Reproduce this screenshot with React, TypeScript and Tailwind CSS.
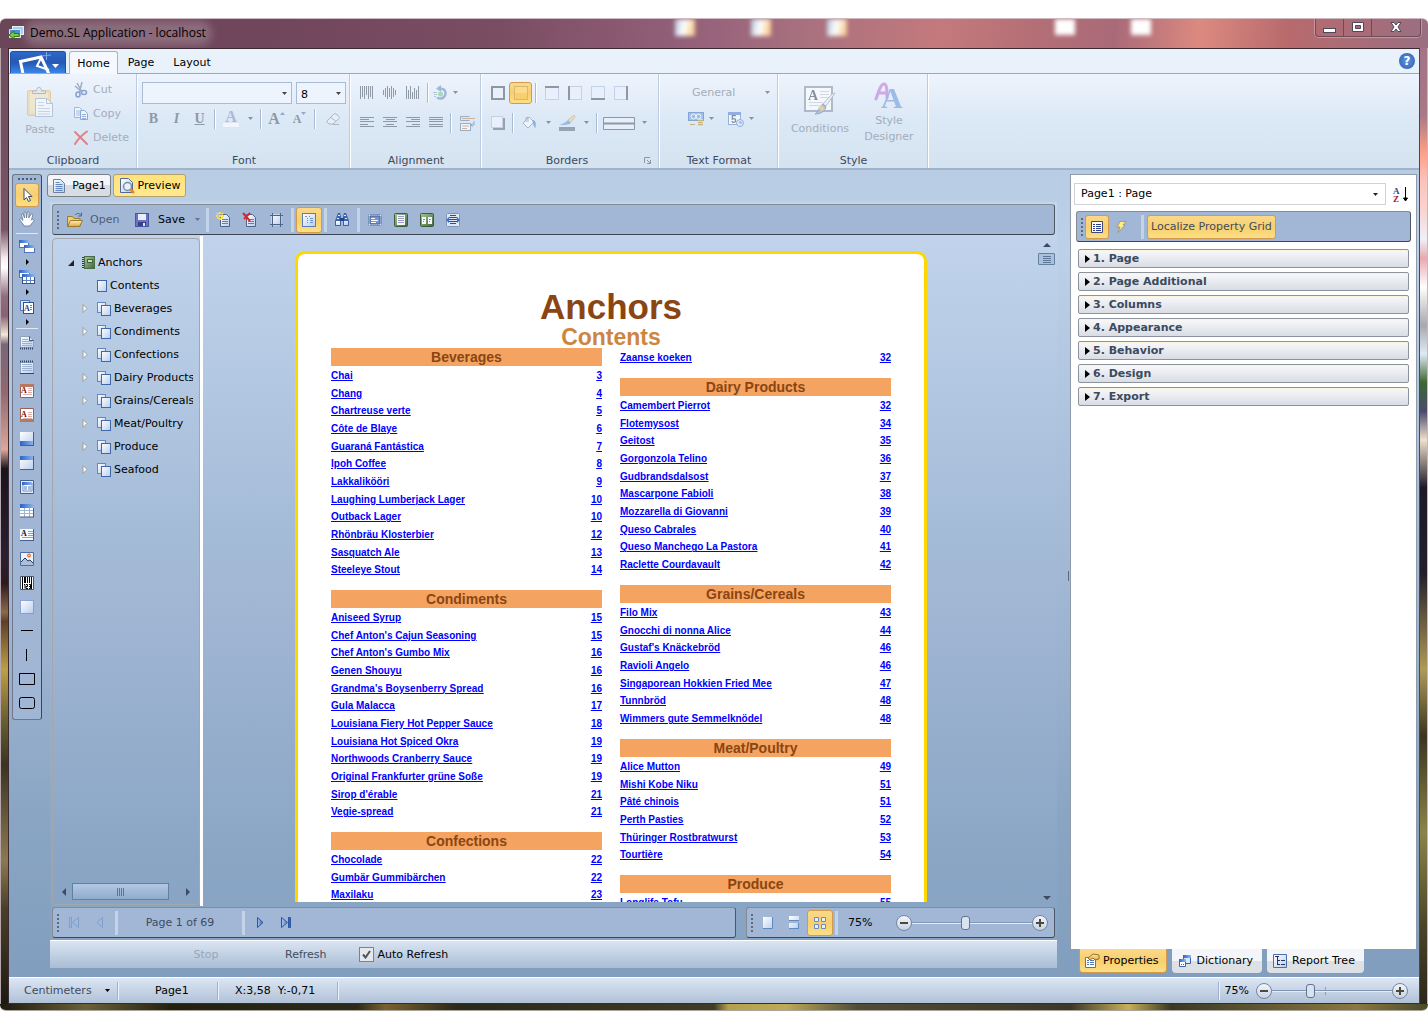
import { useState } from "react";
import type { ReactNode } from "react";
import clsx from "clsx";

type Entry = [string, number];
type Section = { title?: string; items: Entry[] };

const leftColumn: Section[] = [
  {
    title: "Beverages",
    items: [
      ["Chai", 3], ["Chang", 4], ["Chartreuse verte", 5], ["Côte de Blaye", 6], ["Guaraná Fantástica", 7], ["Ipoh Coffee", 8],
      ["Lakkalikööri", 9], ["Laughing Lumberjack Lager", 10], ["Outback Lager", 10], ["Rhönbräu Klosterbier", 12],
      ["Sasquatch Ale", 13], ["Steeleye Stout", 14],
    ],
  },
  {
    title: "Condiments",
    items: [
      ["Aniseed Syrup", 15], ["Chef Anton's Cajun Seasoning", 15], ["Chef Anton's Gumbo Mix", 16], ["Genen Shouyu", 16],
      ["Grandma's Boysenberry Spread", 16], ["Gula Malacca", 17], ["Louisiana Fiery Hot Pepper Sauce", 18],
      ["Louisiana Hot Spiced Okra", 19], ["Northwoods Cranberry Sauce", 19], ["Original Frankfurter grüne Soße", 19],
      ["Sirop d'érable", 21], ["Vegie-spread", 21],
    ],
  },
  { title: "Confections", items: [["Chocolade", 22], ["Gumbär Gummibärchen", 22], ["Maxilaku", 23]] },
];

const rightColumn: Section[] = [
  { items: [["Zaanse koeken", 32]] },
  {
    title: "Dairy Products",
    items: [
      ["Camembert Pierrot", 32], ["Flotemysost", 34], ["Geitost", 35], ["Gorgonzola Telino", 36], ["Gudbrandsdalsost", 37],
      ["Mascarpone Fabioli", 38], ["Mozzarella di Giovanni", 39], ["Queso Cabrales", 40], ["Queso Manchego La Pastora", 41],
      ["Raclette Courdavault", 42],
    ],
  },
  {
    title: "Grains/Cereals",
    items: [
      ["Filo Mix", 43], ["Gnocchi di nonna Alice", 44], ["Gustaf's Knäckebröd", 46], ["Ravioli Angelo", 46],
      ["Singaporean Hokkien Fried Mee", 47], ["Tunnbröd", 48], ["Wimmers gute Semmelknödel", 48],
    ],
  },
  {
    title: "Meat/Poultry",
    items: [
      ["Alice Mutton", 49], ["Mishi Kobe Niku", 51], ["Pâté chinois", 51], ["Perth Pasties", 52],
      ["Thüringer Rostbratwurst", 53], ["Tourtière", 54],
    ],
  },
  { title: "Produce", items: [["Longlife Tofu", 55]] },
];

const treeItems = ["Beverages", "Condiments", "Confections", "Dairy Products", "Grains/Cereals", "Meat/Poultry", "Produce", "Seafood"];
const propertyGroups = ["1. Page", "2. Page Additional", "3. Columns", "4. Appearance", "5. Behavior", "6. Design", "7. Export"];

/* ---------- icons ---------- */

function Svg({ w = 16, h = 16, className, children }: { w?: number; h?: number; className?: string; children: ReactNode }) {
  return (
    <svg width={w} height={h} viewBox={`0 0 ${w} ${h}`} className={clsx("shrink-0", className)} fill="none" aria-hidden="true">
      {children}
    </svg>
  );
}

function Gradients() {
  return (
    <svg width="0" height="0" className="absolute" aria-hidden="true">
      <defs>
        <linearGradient id="sheet" x1="0" y1="0" x2="1" y2="1">
          <stop offset="0" stopColor="#ffffff" />
          <stop offset="1" stopColor="#b9cdec" />
        </linearGradient>
        <linearGradient id="blue" x1="0" y1="0" x2="1" y2="0">
          <stop offset="0" stopColor="#2c62c8" />
          <stop offset="1" stopColor="#8fb6f2" />
        </linearGradient>
        <linearGradient id="gold" x1="0" y1="0" x2="0" y2="1">
          <stop offset="0" stopColor="#fdf0b4" />
          <stop offset="1" stopColor="#e0a93c" />
        </linearGradient>
        <linearGradient id="green" x1="0" y1="0" x2="1" y2="1">
          <stop offset="0" stopColor="#a9c79b" />
          <stop offset="1" stopColor="#3d6637" />
        </linearGradient>
        <linearGradient id="navBlue" x1="0" y1="0" x2="1" y2="0">
          <stop offset="0" stopColor="#a9c4ee" />
          <stop offset="1" stopColor="#2d5bb0" />
        </linearGradient>
      </defs>
    </svg>
  );
}

const Down = ({ className = "text-[#444]" }: { className?: string }) => (
  <Svg w={7} h={4} className={className}><path d="M1 0h5L3.500 3z" fill="currentColor" /></Svg>
);

const PasteIcon = () => (
  <Svg w={28} h={32} className="opacity-50">
    <rect x="1.500" y="4.500" width="23" height="25" rx="1.500" fill="#f3cf8a" stroke="#d6ae68" />
    <rect x="4" y="7" width="18" height="20" fill="#fbe2a8" />
    <path d="M6.500 7.500V5h4c0-5 5-5 5 0h4v2.500z" fill="#dfe3ea" stroke="#7c8694" />
    <path d="M9.500 12.500h11l6 5v13h-17z" fill="#fff" stroke="#8a9ebb" />
    <path d="M20.500 12.500v5h6" stroke="#8a9ebb" />
    <path d="M12 16.500h6M12 19.500h6M12 22.500h12M12 25.500h12M12 28h12" stroke="#a8bedd" />
  </Svg>
);

const CutIcon = () => (
  <Svg className="opacity-50">
    <path d="M4 1l5 9M9 0L6.500 10M2 4l7 6" stroke="#5b6b84" strokeWidth="1.500" />
    <ellipse cx="5" cy="12.500" rx="2" ry="2.500" stroke="#2f56b0" strokeWidth="1.600" />
    <ellipse cx="11" cy="10.500" rx="2.500" ry="2" stroke="#2f56b0" strokeWidth="1.600" />
  </Svg>
);

const CopyIcon = () => (
  <Svg className="opacity-50">
    <path d="M1.500 1.500h5l3 3v7h-8z" fill="#fff" stroke="#5f86c4" />
    <path d="M3 5h4M3 7h4M3 9h4" stroke="#6a90d2" />
    <path d="M7.500 4.500h4l3 3v6h-7z" fill="#fff" stroke="#3e68b4" />
    <path d="M9 8.500h4M9 10.500h4M9 12.500h4" stroke="#4b78c8" />
  </Svg>
);

const DeleteIcon = () => (
  <Svg className="opacity-50">
    <path d="M2 2l12 12M14 1.500C9 5 5 9 2 14" stroke="#e02020" strokeWidth="2" strokeLinecap="round" />
  </Svg>
);

const EraserIcon = () => (
  <Svg className="opacity-60">
    <path d="M2 10l7-7q1-1 2 0l3 2.500q1 1 0 2L8 13H4L2 11z" fill="#eef2f8" stroke="#8b97aa" />
    <path d="M6 6.500l5 4M8 13.500h6" stroke="#8b97aa" />
  </Svg>
);

// vertical bars, for top, middle and bottom alignment
const barShapes = {
  top: [13, 11, 13, 9, 13, 11, 13],
  middle: [5, 9, 13, 9, 13, 9, 5],
  bottom: [13, 9, 13, 7, 11, 9, 13],
};
const BarsIcon = ({ kind }: { kind: "top" | "middle" | "bottom" }) => (
  <Svg w={14} h={14}>
    {barShapes[kind].map((len, i) => {
      const y = kind === "top" ? 0 : kind === "middle" ? (13 - len) / 2 : 13 - len;
      return <rect key={i} x={i * 2} y={y} width="1" height={len} fill="#8f9aa6" />;
    })}
  </Svg>
);

const LinesIcon = ({ kind }: { kind: "left" | "center" | "right" | "full" }) => (
  <Svg w={14} h={12}>
    {[14, 9, 14, 8, 14].map((len, i) => {
      const w = kind === "full" ? 14 : len;
      const x = kind === "center" ? Math.round((14 - w) / 2) : kind === "right" ? 14 - w : 0;
      return <rect key={i} x={x} y={i * 2 + (i > 2 ? 1 : 0)} width={w} height="1" fill="#8d99a6" />;
    })}
  </Svg>
);

const RotateIcon = () => (
  <Svg className="opacity-60">
    <path d="M5 12.500c5 3 9-1 8.500-5C13 4 10 3.500 8 4" stroke="#6f93cc" strokeWidth="2.500" />
    <path d="M9 0v7L4 3.500z" fill="#6f93cc" />
    <circle cx="8.500" cy="9" r="2.500" fill="#7fd07f" />
    <path d="M1 7.500h4M2 9.500h3M2 11.500h2" stroke="#93a8c6" />
  </Svg>
);

const WrapIcon = () => (
  <Svg className="opacity-60">
    <path d="M1.500 1.500h9M1.500 5.500h9M1.500 1.500v4" stroke="#6f87aa" />
    <path d="M3 3.500h13" stroke="#c98d62" />
    <rect x="1.500" y="8.500" width="10" height="7" fill="#fff" stroke="#6f87aa" />
    <path d="M3 11h7M3 13.500h5" stroke="#c98d62" />
    <path d="M15 6v4h-3M13.500 8.500L12 10l1.500 1.500" stroke="#5b80b8" />
  </Svg>
);

const BorderIcon = ({ side }: { side: "all" | "none" | "top" | "left" | "bottom" | "right" | "shadow" }) => (
  <Svg>
    {side === "shadow" && <path d="M3 3h12v12H3z" fill="#98a2ae" />}
    <rect x="1.500" y="1.500" width={side === "shadow" ? 11 : 13} height={side === "shadow" ? 11 : 13}
      fill={side === "none" ? "#fbdc8d" : "#e9f0fb"} stroke={side === "none" ? "#d9b672" : "#c3d0e8"} />
    {side === "none" && <path d="M2 8h12v6H2z" fill="#f8cf6c" />}
    {side === "all" && <rect x="2" y="2" width="12" height="12" stroke="#8e98a3" strokeWidth="2" />}
    {side === "top" && <path d="M1 2h14" stroke="#8e98a3" strokeWidth="2" />}
    {side === "bottom" && <path d="M1 14h14" stroke="#8e98a3" strokeWidth="2" />}
    {side === "left" && <path d="M2 1v14" stroke="#8e98a3" strokeWidth="2" />}
    {side === "right" && <path d="M14 1v14" stroke="#8e98a3" strokeWidth="2" />}
  </Svg>
);

const BucketIcon = () => (
  <Svg className="opacity-60">
    <path d="M2 8l6-6 5 5-6 6z" fill="#fff" stroke="#8096b8" />
    <path d="M5 7V3q1-2 2 0v4" stroke="#8096b8" />
    <path d="M11 5c4 0 4 3 3.500 8-2-1-2-4-2.500-5z" fill="#5d87cc" />
  </Svg>
);

const BrushIcon = () => (
  <Svg w={18}>
    <g opacity="0.6">
      <path d="M16 0l-6 5 2 3 5-6z" fill="#edd49b" stroke="#c9b17b" />
      <path d="M10 5l3 3c-2 2-8 2-12 2 3-1 6-2 9-5z" fill="#6e9ade" />
    </g>
    <path d="M1 12h16v4H1z" fill="#97a3af" />
  </Svg>
);

const LineStyleIcon = () => (
  <Svg w={32} h={13}>
    <path d="M.5.5h31v12H.5z" stroke="#8e98a3" fill="#e6eefa" />
    <path d="M0 6.500h32" stroke="#8e98a3" strokeWidth="2" />
  </Svg>
);

const CurrencyIcon = () => (
  <Svg className="opacity-60">
    <rect x=".5" y="1.500" width="15" height="8" fill="#7ba3e0" stroke="#4d79c0" />
    <ellipse cx="5.500" cy="5.500" rx="2.500" ry="2.500" stroke="#fff" />
    <ellipse cx="10.500" cy="5.500" rx="2.500" ry="2.500" stroke="#fff" />
    <path d="M10 8h5v7h-5z" fill="#f1d383" />
    <path d="M10 9.500h5M10 11.500h5M10 13.500h5M2 13.500h5" stroke="#b99137" />
  </Svg>
);

const DateIcon = () => (
  <Svg className="opacity-60">
    <rect x=".5" y="1.500" width="12" height="12" fill="#fff" stroke="#6f8fc4" />
    <path d="M0 1h13v3H0z" fill="#5c88d0" />
    <text x="3" y="12" fontSize="10" fontWeight="bold" fill="#4a5568" fontFamily="Liberation Sans">5</text>
    <circle cx="12" cy="12" r="3.500" fill="#dbe9fb" stroke="#5d8fd6" />
    <path d="M12 10v2h2" stroke="#4a6ea8" />
  </Svg>
);

const ConditionsIcon = () => (
  <Svg w={32} h={30} className="opacity-60">
    <rect x="1" y="1" width="27" height="24" fill="#fff" stroke="#8b98aa" strokeWidth="2" />
    <text x="4" y="14" fontSize="14" fontWeight="bold" fill="#4b545f" fontFamily="Liberation Serif">A</text>
    <path d="M16 5.500h9M16 8.500h9M16 11.500h9M5 16.500h14M5 19.500h10" stroke="#c2cad6" />
    <path d="M31 7l-9 13-3-2L28 8z" fill="#f1f5fa" stroke="#97a3b4" />
    <path d="M19 18l3 3c-2 6-7 7-11 7 4-2 3-7 8-10z" fill="#8fa5cc" stroke="#6580b3" />
    <path d="M17 19l4 4-3 2-4-3z" fill="#ecbd6e" />
  </Svg>
);

const StyleIcon = () => (
  <Svg w={32} h={28} className="opacity-60">
    <path d="M3 17C6 8 8 2 11 2c3 0 3 6 3 14M5 11h8" stroke="#c07ad8" strokeWidth="3" strokeLinecap="round" />
    <text x="8" y="26" fontSize="30" fontWeight="bold" fill="#6f9bdc" fontFamily="Liberation Serif">A</text>
  </Svg>
);

const PageIcon = () => (
  <Svg w={14} h={16}>
    <path d="M1.500 1.500h7l4 4v9h-11z" fill="url(#sheet)" stroke="#6b7f9e" />
    <path d="M3.500 4.500h4M3.500 6.500h7M3.500 8.500h7M3.500 10.500h7M3.500 12.500h7" stroke="#5f86c0" />
  </Svg>
);

const PreviewIcon = () => (
  <Svg>
    <path d="M1.500.5h8l4 4v10h-12z" fill="url(#sheet)" stroke="#53698f" />
    <circle cx="8.500" cy="8.500" r="4" fill="#e3f2fb" stroke="#7c8ea6" strokeWidth="1.500" />
    <path d="M11.500 11.500l3.500 3.500" stroke="#e08a2e" strokeWidth="2.500" />
  </Svg>
);

const OpenIcon = () => (
  <Svg w={18}>
    <path d="M1.500 14.500v-10h5l1.500 2h6v8z" fill="#f2cf73" stroke="#9b7a30" />
    <path d="M1.500 14.500l3-6h12l-3 6z" fill="url(#gold)" stroke="#9b7a30" />
    <path d="M9 3c2-2 4-2 6 0M15.500.5v3.500h-3.500" stroke="#3f68a8" />
  </Svg>
);

const SaveIcon = () => (
  <Svg>
    <rect x="1.500" y="1.500" width="13" height="13" fill="#6a72c4" stroke="#4c54a4" />
    <path d="M4 2h8v6H4z" fill="#e9ecfa" />
    <path d="M4 10h8v4H4z" fill="#3a4088" />
    <path d="M9 11h2v3H9z" fill="#e3e6f5" />
  </Svg>
);

const SheetIcon = ({ mark }: { mark: "new" | "delete" | "size" }) => (
  <Svg>
    {mark === "size" ? (
      <>
        <path d="M3.500 2.500h10v11h-10z" fill="url(#sheet)" />
        <path d="M4.500 1v14M12.500 1v14M2 3.500h13M2 12.500h13" stroke="#4d6488" />
      </>
    ) : (
      <>
        <path d="M4.500 2.500h6l3 3v9h-9z" fill="url(#sheet)" stroke="#4d6488" />
        <path d="M6 7.500h6M6 9.500h6M6 11.500h6" stroke="#5c7fb4" />
      </>
    )}
    {mark === "new" && <path d="M4 0v8M0 4h8M1 1l6 6M7 1L1 7" stroke="#f7dc52" strokeWidth="2" strokeDasharray="2 1" />}
    {mark === "delete" && <path d="M1 1l7 8M8 1L2 7" stroke="#e8202c" strokeWidth="2" />}
  </Svg>
);

const BookmarksIcon = () => (
  <Svg w={14} h={14}>
    <rect x=".5" y=".5" width="13" height="13" fill="url(#sheet)" stroke="#5780b0" />
    <path d="M3 3.500h2M5 5.500h1M5 7.500h1M5 9.500h1M7 3.500h1M8 5.500h3M8 7.500h3M8 9.500h3" stroke="#6f92c6" />
  </Svg>
);

const FindIcon = () => (
  <Svg>
    <path d="M4 1h2l1 4v9H1V9zM10 1h2l3 8v5H9V5z" fill="#3f62a8" />
    <path d="M2 9h4v4H2zM10 9h4v4h-4z" fill="url(#sheet)" />
    <path d="M6 6h4v3H6z" fill="#20458c" />
    <path d="M4 3.500h2M10 3.500h2M3 6.500h2M11 6.500h2" stroke="#e2ecfc" />
  </Svg>
);

const FitIcon = ({ kind }: { kind: "full" | "page" | "two" | "width" }) => (
  <Svg>
    <rect x="1.500" y={kind === "full" ? 2.5 : 1.5} width="13" height={kind === "full" ? 11 : 13} rx="1"
      fill={kind === "page" || kind === "two" ? "url(#green)" : "#dce6f4"}
      stroke={kind === "page" || kind === "two" ? "#3d5c3c" : "#7f93b2"} />
    {kind === "full" && <><path d="M3 4h10v8H3z" fill="#7492cc" stroke="#3f5fa4" /><path d="M4 6.500h4M4 8.500h7M4 10.500h5" stroke="#fff" /></>}
    {kind === "page" && <><path d="M4 3h8v10H4z" fill="#f4f6fb" /><path d="M5 4.500h6M5 6.500h6M5 8.500h6M5 10.500h6" stroke="#9a9cc4" /></>}
    {kind === "two" && <><path d="M3 5h4v7H3zM9 5h4v7H9z" fill="#f4f6fb" /><path d="M4 7.500h2M4 9.500h1M10 7.500h2M10 9.500h1" stroke="#7f93b8" /></>}
    {kind === "width" && <><path d="M5 3.500h6M4 5.500h8M4 7.500h8M4 9.500h8M5 11.500h6" stroke="#3d4f6c" /><path d="M1 8l3-3v6zM15 8l-3-3v6z" fill="#3b71d0" /></>}
  </Svg>
);

const BookIcon = () => (
  <Svg w={14} h={14}>
    <rect x="2.500" y=".5" width="10" height="12" fill="url(#green)" stroke="#4a6b46" />
    <path d="M1 1v12" stroke="#2b402a" strokeWidth="2" strokeDasharray="1 1" />
    <rect x="5.500" y="3.500" width="5" height="3" fill="#c9dfbf" stroke="#3f6339" />
  </Svg>
);

const LeafIcon = () => (
  <Svg w={10} h={12}><rect x=".5" y=".5" width="9" height="11" fill="url(#sheet)" stroke="#3f68a8" /></Svg>
);

const PagesIcon = () => (
  <Svg w={14} h={14}>
    <rect x=".5" y=".5" width="8" height="10" fill="url(#sheet)" stroke="#6488bd" />
    <rect x="4.500" y="3.500" width="9" height="10" fill="url(#sheet)" stroke="#3f68a8" />
  </Svg>
);

const PointerIcon = () => (
  <Svg><path d="M5 1.500v11.500l2.500-2.500 2 4 2-1-2-4H13z" fill="#fff" stroke="#3d4d69" /></Svg>
);

const HandIcon = () => (
  <Svg>
    <path d="M5 15c-1-3-4-5-4.500-7 1-1 2 0 3.500 1.500L2.500 4c0-1.500 1.500-1.500 2 0l1 3-.5-5c0-1.500 1.800-1.500 2 0l.5 5 .8-5.500c.4-1.300 2-1 1.800.5l-.4 5L12 3.500c.6-1 2-.6 1.700.7L12.500 9c2-1 3 0 2.500 1-1.500 1.500-3 3-4 5z" fill="#fff" stroke="#5f7494" strokeWidth=".8" />
  </Svg>
);

function BandIcon({ kind }: { kind: string }) {
  switch (kind) {
    case "bands":
      return (
        <Svg>
          <rect x=".5" y="1.500" width="9" height="7" fill="#fff" stroke="#4f75b8" />
          <path d="M0 1h10v3H0z" fill="url(#blue)" />
          <rect x="5.500" y="6.500" width="10" height="7" fill="#fff" stroke="#4f75b8" />
          <path d="M5 6h11v3H5z" fill="url(#blue)" />
        </Svg>
      );
    case "cross":
      return (
        <Svg>
          <rect x=".5" y="1.500" width="10" height="7" fill="#fff" stroke="#4f75b8" />
          <path d="M0 1h11v3H0z" fill="url(#blue)" />
          <rect x="3.500" y="5.500" width="12" height="9" fill="#fff" stroke="#34508a" />
          <path d="M3 5h13v3H3z" fill="url(#blue)" />
          <path d="M4 11.500h11M7.500 8v6M11.500 8v6" stroke="#5f82bf" />
        </Svg>
      );
    case "components":
      return (
        <Svg>
          <path d="M1.500 1.500h9v10h-9z" fill="#dbe7f8" stroke="#4f75b8" />
          <rect x="4.500" y="3.500" width="10" height="11" fill="#fff" stroke="#34508a" />
          <text x="5" y="12" fontSize="8" fontWeight="bold" fill="#23407c" fontFamily="Liberation Serif">A</text>
          <path d="M11 6.500h2M11 8.500h2M11 10.500h2" stroke="#5f82bf" />
        </Svg>
      );
    case "title":
      return (
        <Svg w={14} h={14}>
          <path d="M.5.5h9l4 4v7h-13z" fill="url(#sheet)" stroke="#8ea2c0" />
          <path d="M9.500.5v4h4" stroke="#42597f" />
          <path d="M2 3.500h6M2 5.500h10M2 7.500h10M2 9.500h10" stroke="#9db2d0" />
          <path d="M0 12.500h14" stroke="#35486a" strokeWidth="2" strokeDasharray="1 1" />
        </Svg>
      );
    case "summary":
      return (
        <Svg w={14} h={14}>
          <path d="M.5 2.500h13v11H.5z" fill="url(#sheet)" stroke="#8ea2c0" />
          <path d="M2 4.500h10M2 6.500h10M2 8.500h10M2 10.500h10" stroke="#9db2d0" />
          <path d="M0 1.500h14" stroke="#35486a" strokeWidth="2" strokeDasharray="1 1" />
          <path d="M0 13.500h14" stroke="#35486a" />
        </Svg>
      );
    case "pageHeader":
    case "pageFooter":
      return (
        <Svg w={14} h={14}>
          <path d="M.5.500h13v13H.5z" fill="#fff" stroke="#9a6050" />
          <path d={kind === "pageHeader" ? "M0 0h14v3H0z" : "M0 11h14v3H0z"} fill="#b87860" />
          <text x="1" y="9" fontSize="8" fontWeight="bold" fill="#801010" fontFamily="Liberation Serif">A</text>
          <path d="M8 4.500h4M8 6.500h4M8 8.500h4M3 10.500h9" stroke="#e0b0a8" />
        </Svg>
      );
    case "reportHeader":
    case "reportFooter":
      return (
        <Svg w={14} h={14}>
          <path d="M0 0h14v14H0z" fill="url(#sheet)" />
          <path d={kind === "reportFooter" ? "M0 0h14v4H0z" : "M0 9h14v4H0z"} fill="url(#blue)" />
          <path d="M0 13.500h14M13.500 0v14" stroke="#43608f" />
        </Svg>
      );
    case "group":
      return (
        <Svg w={14} h={14}>
          <path d="M.5.5h13v13H.5z" fill="#e4edfa" stroke="#43608f" />
          <path d="M3 3h9v8H3z" fill="#fff" stroke="#6d90cd" />
          <path d="M2 2h10v3H2z" fill="url(#blue)" />
          <path d="M4 7h3M8 7h3M4 9h3M8 9h3" stroke="#5277b5" />
        </Svg>
      );
    case "table":
      return (
        <Svg w={14} h={14}>
          <path d="M0 1h14v12H0z" fill="#fff" />
          <path d="M0 0h14v4H0z" fill="url(#blue)" />
          <path d="M0 6.500h14M0 9.500h14M4.500 4v9M9.500 4v9" stroke="#9db3d8" />
          <path d="M0 13h14M13.500 4v9" stroke="#43608f" />
        </Svg>
      );
    case "text":
      return (
        <Svg w={14} h={12}>
          <path d="M0 0h14v12H0z" fill="#f6f9fe" />
          <text x="1" y="7" fontSize="8" fontWeight="bold" fill="#111" fontFamily="Liberation Serif">A</text>
          <path d="M8 2.500h5M8 4.500h5M8 6.500h5M2 8.500h11" stroke="#8ea5cc" />
          <path d="M0 11.500h14M13.500 0v12" stroke="#43608f" />
        </Svg>
      );
    case "image":
      return (
        <Svg w={14} h={14}>
          <path d="M.5.5h13v13H.5z" fill="#eaf2fc" stroke="#4d6ea6" />
          <path d="M1 10l4-4 3 3 2-1 3 3v2H1z" fill="#aebfd8" />
          <path d="M1 10l4-4 3 3 2-1 3 3" stroke="#2c3c58" />
          <circle cx="9" cy="3.500" r="1.500" fill="#fbd38a" stroke="#e0571c" />
        </Svg>
      );
    case "barcode":
      return (
        <Svg w={14} h={14}>
          <path d="M.5.5h13v13H.5z" fill="#fff" stroke="#4a5568" />
          <path d="M2 1h1v12H2zM4 1h2v6H4zM7 1h1v6H7zM9 1h1v6H9zM11 1h1v12h-1z" fill="#000" />
          <path d="M4 8.500h1v4M6 8.500h1.500v2H6v2h2M9 8.500h1.500v4H9M9 10.500h1" stroke="#000" />
        </Svg>
      );
    case "panel":
      return (
        <Svg w={14} h={14}>
          <path d="M0 0h14v14H0z" fill="#dfe9f9" />
          <path d="M.5.5h13v13H.5z" fill="url(#sheet)" stroke="#2f5bc0" strokeDasharray="1 1" />
        </Svg>
      );
    case "hline":
      return <Svg w={12} h={2}><path d="M0 .5h12" stroke="#000" /></Svg>;
    case "vline":
      return <Svg w={2} h={12}><path d="M.5 0v12" stroke="#000" /></Svg>;
    case "rect":
      return <Svg w={16} h={12}><path d="M.5.5h15v11H.5z" stroke="#000" /></Svg>;
    default:
      return <Svg w={16} h={12}><rect x=".5" y=".5" width="15" height="11" rx="2" stroke="#000" /></Svg>;
  }
}

const bandTools = [
  "title", "summary", "pageHeader", "pageFooter", "reportHeader", "reportFooter", "group", "table",
  "text", "image", "barcode", "panel", "hline", "vline", "rect", "roundRect",
];

/* ---------- small parts ---------- */

const active = "border border-[#d39a4b] rounded-[3px] bg-[linear-gradient(#fbd98a,#f8cf6e_50%,#fbdf85)]";
const bar = "flex items-center h-[31px] rounded-[3px] border border-[#858b93] border-b-[#3d4552] border-r-[#4d5766] bg-[#a1b7d5]";

function Tool({ label, w = "w-[23px]", on, children }: { label: string; w?: string; on?: boolean; children: ReactNode }) {
  return (
    <button type="button" aria-label={label} className={clsx("flex h-[22px] shrink-0 items-center justify-center", w, on && active)}>
      {children}
    </button>
  );
}

function BarTool({ label, on, children }: { label: string; on?: boolean; children: ReactNode }) {
  return (
    <button type="button" aria-label={label} className={clsx("flex h-[26px] w-[26px] shrink-0 items-center justify-center", on && active)}>
      {children}
    </button>
  );
}

const RibbonSep = () => <div className="mx-[3px] h-5 w-[2px] shrink-0 border-l border-[#a9bbd4] bg-white" />;
const BarSep = () => <div className="mx-[2px] h-6 w-[3px] shrink-0 bg-[#c3d3e8]" />;
const StatusSep = () => <div className="h-[18px] w-[2px] shrink-0 border-l border-[#9db1cc] bg-[#eef4fb]" />;
const Grip = () => <div className="mr-[2px] ml-1 h-[18px] w-0 shrink-0 border-l-2 border-dotted border-[#5d6b80]" />;

function Group({ title, w, launcher, children }: { title: string; w: string; launcher?: boolean; children: ReactNode }) {
  return (
    <section className={clsx("flex shrink-0 flex-col border-r border-white shadow-[inset_-1px_0_0_#bccbdf]", w)}>
      <div className="flex-1 px-1 pt-2">{children}</div>
      <div className="flex h-[15px] items-center pr-2 pl-2">
        <h2 className="flex-1 text-center text-[#3b4a5e]">{title}</h2>
        {launcher && (
          <button type="button" aria-label={`${title} options`}>
            <Svg w={7} h={7}><path d="M.5 6V.5H6M3 3l3 3M6.500 3v3.500H3" stroke="#8b97a6" /></Svg>
          </button>
        )}
      </div>
    </section>
  );
}

function ZoomSlider({ id, value, tick }: { id: string; value: number; tick?: boolean }) {
  const [zoom, setZoom] = useState(value);
  const round = "flex h-4 w-4 shrink-0 items-center justify-center rounded-full border border-[#76879f] bg-[linear-gradient(#f2f6fb,#c6d3e5)]";
  return (
    <div className="flex items-center">
      <button type="button" aria-label="Zoom out" className={round} onClick={() => setZoom(zoom - 5)}>
        <Svg w={8} h={8}><path d="M0 4h8" stroke="#4a4a3c" strokeWidth="2" /></Svg>
      </button>
      <div className="relative flex items-center">
        {tick && <span className="absolute left-[53px] h-2 w-px bg-[#8ba0bd]" />}
        <input
          id={id} type="range" aria-label="Zoom" min={0} max={100} value={zoom} onChange={(e) => setZoom(Number(e.target.value))}
          className="relative h-4 w-[120px] appearance-none bg-transparent [&::-webkit-slider-runnable-track]:h-[2px] [&::-webkit-slider-runnable-track]:border-b [&::-webkit-slider-runnable-track]:border-[#e4ecf6] [&::-webkit-slider-runnable-track]:bg-[#8096b4] [&::-webkit-slider-thumb]:-mt-1.5 [&::-webkit-slider-thumb]:h-[14px] [&::-webkit-slider-thumb]:w-[9px] [&::-webkit-slider-thumb]:appearance-none [&::-webkit-slider-thumb]:rounded-[3px] [&::-webkit-slider-thumb]:border [&::-webkit-slider-thumb]:border-[#62738d] [&::-webkit-slider-thumb]:bg-[#d9e3f0]"
        />
      </div>
      <button type="button" aria-label="Zoom in" className={round} onClick={() => setZoom(zoom + 5)}>
        <Svg w={8} h={8}><path d="M0 4h8M4 0v8" stroke="#4a4a3c" strokeWidth="2" /></Svg>
      </button>
    </div>
  );
}

/* ---------- window and ribbon ---------- */

function TitleBar() {
  return (
    <header className="flex h-[30px] shrink-0 items-start overflow-hidden rounded-t-md border-t border-[#cfb9c0] bg-[linear-gradient(95deg,#6b4558,#70465c_18%,#7a4d62_35%,#93607a_48%,#a8707f_56%,#c47a7c_66%,#b56f76_72%,#a96a78_78%,#dc8a80_84%,#b86a6c_90%,#9a6f82)]">
      <div className="flex h-[28px] items-center pl-2">
        <Svg w={18}>
          <rect x="4.500" y="1.500" width="11" height="8" fill="#9fd0f4" stroke="#e6eef6" />
          <path d="M1.500 4.500h11v8h-11z" fill="#4c8fd0" stroke="#dbe6f0" />
          <path d="M1 10l5-4v2.500h5v3H6V14z" fill="#7ac943" stroke="#2e7d16" />
        </Svg>
        <h1 className="ml-1 rounded-lg bg-white/20 text-[12px] font-normal text-black shadow-[0_0_8px_6px_#ffffff33] [font-family:'Open_Sans','Noto_Sans',sans-serif]">
          Demo.SL Application - localhost
        </h1>
      </div>
      <div className="flex-1" />
      {/* desktop icons showing through the glass */}
      <div className="flex w-[640px] shrink items-start">
        {[0, 1, 2].map((i) => (
          <span key={i} className="mr-[56px] h-[17px] w-5 bg-[linear-gradient(100deg,#b5c5dc,#ffffff_45%,#f3c27a)] blur-[2px]" />
        ))}
        <span className="mr-[56px] ml-[152px] h-4 w-5 bg-white blur-[2px]" />
        <span className="h-4 w-5 bg-white blur-[2px]" />
      </div>
      <div className="mr-[7px] flex h-[18px] rounded-b border border-t-0 border-[#6f4a58] shadow-[0_0_0_1px_#ffffff4d]">
        <button type="button" aria-label="Minimize" className="flex w-7 items-center justify-center border-r border-[#6f4a58]">
          <Svg w={13} h={12}><rect x=".5" y="6.500" width="12" height="4" fill="#fff" stroke="#4a4a5c" /></Svg>
        </button>
        <button type="button" aria-label="Maximize" className="flex w-7 items-center justify-center border-r border-[#6f4a58]">
          <Svg w={12} h={12}><path d="M.5.5h11v9H.5zM3.500 3.500v3h5v-3z" fill="#fff" fillRule="evenodd" stroke="#4a4a5c" /></Svg>
        </button>
        <button type="button" aria-label="Close" className="flex w-12 items-center justify-center">
          <Svg w={12} h={12}><path d="M1 .5h3l2 2.500 2-2.500h3L8 5l3 4.500H8L6 7 4 9.500H1L4 5z" fill="#fff" stroke="#4a4a5c" /></Svg>
        </button>
      </div>
    </header>
  );
}

function RibbonTabs() {
  return (
    <nav className="flex h-[25px] shrink-0 items-end border-b border-[#93a9c5] bg-[#e9f1fb]">
      <button type="button" aria-label="Application menu" className="ml-px h-[22px] w-14 overflow-hidden rounded-t-[3px] border border-b-0 border-[#1f4fa6] bg-[linear-gradient(#2f68c8,#2459b4_50%,#3a86e8)]">
        <Svg w={54} h={21}>
          <path d="M12 22L9.500 9.500 30 5l8 17" stroke="#fff" strokeWidth="3" />
          <path d="M30 6l-4 8 12 4" stroke="#fff" strokeWidth="2" />
          <path d="M35.500 0v8M31 4l9-1" stroke="#7fa8e4" />
          <path d="M41 12h7l-3.500 4z" fill="#fff" />
        </Svg>
      </button>
      <button type="button" className="-mb-px ml-[3px] h-[23px] w-[49px] rounded-t-[3px] border border-b-0 border-[#a5b4c8] bg-[#f5f9fe] pt-[2px] text-black">Home</button>
      <button type="button" className="h-[22px] w-[46px] pt-[2px] text-black">Page</button>
      <button type="button" className="h-[22px] w-14 pt-[2px] text-black">Layout</button>
      <div className="flex-1" />
      <button type="button" aria-label="Help" className="mr-1 mb-1 flex h-4 w-4 items-center justify-center rounded-full bg-[radial-gradient(#5f95e0,#2a5cae)] text-[12px] font-bold text-white">?</button>
    </nav>
  );
}

function Ribbon() {
  return (
    <div className="flex h-[96px] shrink-0 overflow-hidden border-b-2 border-[#9fb3cc] bg-[linear-gradient(#eef4fd,#dbe8f5_50%,#d5e2f0)] text-[#a3aebb]">
      <Group title="Clipboard" w="w-[129px]">
        <div className="flex">
          <button type="button" className="flex w-[54px] flex-col items-center gap-[5px] pt-1">
            <PasteIcon />
            <span>Paste</span>
          </button>
          <div className="flex flex-col pl-[6px]">
            <button type="button" className="-mt-1 flex h-6 items-center gap-1"><CutIcon />Cut</button>
            <button type="button" className="flex h-6 items-center gap-1"><CopyIcon />Copy</button>
            <button type="button" className="flex h-6 items-center gap-1"><DeleteIcon />Delete</button>
          </div>
        </div>
      </Group>
      <Group title="Font" w="w-[213px]">
        <div className="flex gap-1">
          <div className="relative h-[22px] w-[150px] border border-[#a9bbd6] bg-[#edf4fd]">
            <select aria-label="Font name" className="h-full w-full appearance-none bg-transparent"><option></option></select>
            <span className="pointer-events-none absolute top-[9px] right-[3px]"><Down /></span>
          </div>
          <div className="relative h-[22px] w-[50px] border border-[#a9bbd6] bg-[#edf4fd]">
            <select aria-label="Font size" className="h-full w-full appearance-none bg-transparent pl-1 pt-1 text-black"><option>8</option></select>
            <span className="pointer-events-none absolute top-[9px] right-[3px]"><Down /></span>
          </div>
        </div>
        <div className="mt-1 flex items-center font-bold text-[#8f99a5] [font-family:'Liberation_Serif',serif]">
          <Tool label="Bold"><span className="text-[14px]">B</span></Tool>
          <Tool label="Italic"><span className="text-[14px] italic">I</span></Tool>
          <Tool label="Underline"><span className="text-[14px] underline">U</span></Tool>
          <RibbonSep />
          <Tool label="Font color" w="w-6"><span className="flex h-4 w-4 items-center justify-center border-b-4 border-[#f2f6fc] text-[16px] text-[#a8bad8]">A</span></Tool>
          <Tool label="Font color menu" w="w-[14px]"><Down className="text-[#8893a2]" /></Tool>
          <RibbonSep />
          <Tool label="Grow font"><span className="text-[16px]">A</span><Svg w={5} h={14}><path d="M0 3h5L2.500 0z" fill="#93a9d0" /></Svg></Tool>
          <Tool label="Shrink font"><span className="text-[12px]">A</span><Svg w={5} h={14}><path d="M0 0h5L2.500 3z" fill="#93a9d0" /></Svg></Tool>
          <RibbonSep />
          <Tool label="Clear formatting" w="w-[27px]"><EraserIcon /></Tool>
        </div>
      </Group>
      <Group title="Alignment" w="w-[131px]">
        <div className="flex items-center">
          <Tool label="Align top"><BarsIcon kind="top" /></Tool>
          <Tool label="Align middle"><BarsIcon kind="middle" /></Tool>
          <Tool label="Align bottom"><BarsIcon kind="bottom" /></Tool>
          <RibbonSep />
          <Tool label="Angle" w="w-4"><RotateIcon /></Tool>
          <Tool label="Angle menu" w="w-[14px]"><Down className="text-[#8893a2]" /></Tool>
        </div>
        <div className="mt-2 flex items-center">
          <Tool label="Align left"><LinesIcon kind="left" /></Tool>
          <Tool label="Align center"><LinesIcon kind="center" /></Tool>
          <Tool label="Align right"><LinesIcon kind="right" /></Tool>
          <Tool label="Justify"><LinesIcon kind="full" /></Tool>
          <RibbonSep />
          <Tool label="Wrap text"><WrapIcon /></Tool>
        </div>
      </Group>
      <Group title="Borders" w="w-[178px]" launcher>
        <div className="flex items-center">
          <Tool label="All borders"><BorderIcon side="all" /></Tool>
          <Tool label="No border" on><BorderIcon side="none" /></Tool>
          <RibbonSep />
          <Tool label="Top border"><BorderIcon side="top" /></Tool>
          <Tool label="Left border"><BorderIcon side="left" /></Tool>
          <Tool label="Bottom border"><BorderIcon side="bottom" /></Tool>
          <Tool label="Right border"><BorderIcon side="right" /></Tool>
        </div>
        <div className="mt-2 flex items-center">
          <Tool label="Shadow"><BorderIcon side="shadow" /></Tool>
          <RibbonSep />
          <Tool label="Fill color" w="w-6"><BucketIcon /></Tool>
          <Tool label="Fill color menu" w="w-[14px]"><Down className="text-[#8893a2]" /></Tool>
          <Tool label="Border color" w="w-6"><BrushIcon /></Tool>
          <Tool label="Border color menu" w="w-[14px]"><Down className="text-[#8893a2]" /></Tool>
          <RibbonSep />
          <Tool label="Border style" w="w-9"><LineStyleIcon /></Tool>
          <Tool label="Border style menu" w="w-[14px]"><Down className="text-[#8893a2]" /></Tool>
        </div>
      </Group>
      <Group title="Text Format" w="w-[119px]">
        <button type="button" className="flex h-[22px] w-full items-center justify-between pr-[3px] pl-7">
          General <Down className="text-[#8893a2]" />
        </button>
        <div className="mt-1 flex items-center pl-5">
          <Tool label="Currency"><CurrencyIcon /></Tool>
          <Tool label="Currency menu" w="w-2"><Down className="text-[#8893a2]" /></Tool>
          <div className="w-[9px]" />
          <Tool label="Date"><DateIcon /></Tool>
          <Tool label="Date menu" w="w-2"><Down className="text-[#8893a2]" /></Tool>
        </div>
      </Group>
      <Group title="Style" w="w-[150px]">
        <div className="flex">
          <button type="button" className="flex w-[74px] flex-col items-center gap-1.5 pt-1">
            <ConditionsIcon />
            <span>Conditions</span>
          </button>
          <button type="button" className="flex w-16 flex-col items-center gap-[3px] leading-4">
            <StyleIcon />
            <span>Style<br />Designer</span>
          </button>
        </div>
      </Group>
    </div>
  );
}

/* ---------- workspace ---------- */

function Toolbox() {
  const divider = "my-[2px] h-px w-[22px] shrink-0 bg-[#dfe8f3]";
  return (
    <aside className="flex w-[30px] shrink-0 flex-col items-center self-start rounded-[3px] border border-[#6d7788] border-r-[#3d4552] bg-[#a0b6d4] pb-1">
      <div className="mt-[3px] mb-[3px] h-0 w-[18px] border-t-2 border-dotted border-[#4d5b72]" />
      <button type="button" aria-label="Select" className={clsx("flex h-6 w-6 items-center justify-center", active)}><PointerIcon /></button>
      <button type="button" aria-label="Pan" className="flex h-6 w-6 items-center justify-center"><HandIcon /></button>
      <div className={divider} />
      {["bands", "cross", "components"].map((kind) => (
        <button key={kind} type="button" aria-label={kind} className="flex w-6 flex-col items-center">
          <span className="flex h-[22px] items-center"><BandIcon kind={kind} /></span>
          <Svg w={4} h={8}><path d="M1 1v6l3-3z" fill="#000" /></Svg>
        </button>
      ))}
      <div className={divider} />
      {bandTools.map((kind) => (
        <button key={kind} type="button" aria-label={kind} className="flex h-6 w-6 items-center justify-center"><BandIcon kind={kind} /></button>
      ))}
    </aside>
  );
}

function PreviewToolbar() {
  return (
    <div className={bar}>
      <Grip />
      <button type="button" className="ml-[5px] flex w-[68px] items-center gap-[6px] text-[#4f5f78]"><OpenIcon />Open</button>
      <button type="button" className="flex w-[60px] items-center gap-2 text-black"><SaveIcon />Save</button>
      <button type="button" aria-label="Save menu"><Down className="text-[#65728a]" /></button>
      <div className="w-[3px]" />
      <BarSep />
      <BarTool label="New page"><SheetIcon mark="new" /></BarTool>
      <BarTool label="Delete page"><SheetIcon mark="delete" /></BarTool>
      <BarTool label="Page size"><SheetIcon mark="size" /></BarTool>
      <BarSep />
      <BarTool label="Bookmarks" on><BookmarksIcon /></BarTool>
      <BarSep />
      <BarTool label="Find"><FindIcon /></BarTool>
      <BarSep />
      <BarTool label="Full screen"><FitIcon kind="full" /></BarTool>
      <BarTool label="One page"><FitIcon kind="page" /></BarTool>
      <BarTool label="Two pages"><FitIcon kind="two" /></BarTool>
      <BarTool label="Page width"><FitIcon kind="width" /></BarTool>
    </div>
  );
}

function BookmarkTree() {
  const row = "flex h-[23px] items-center whitespace-nowrap";
  return (
    <div className="mt-[3px] mb-[2px] flex w-[148px] shrink-0 flex-col rounded-[4px] border border-[#a3a7ad] pt-3 text-black">
      <ul className="mr-[6px] flex-1 overflow-hidden">
        <li className={clsx(row, "pl-[14px]")}>
          <Svg w={8} h={8} className="mr-[7px]"><path d="M7 1v6H1z" fill="#222" /></Svg>
          <BookIcon /><a href="#anchors" className="ml-[2px]">Anchors</a>
        </li>
        <li className={clsx(row, "pl-11")}><LeafIcon /><a href="#contents" className="ml-[3px]">Contents</a></li>
        {treeItems.map((name) => (
          <li key={name} className={clsx(row, "pl-[29px]")}>
            <Svg w={6} h={9} className="mr-[9px]"><path d="M1 .5l4 4-4 4z" fill="#fff" stroke="#a09c94" /></Svg>
            <PagesIcon /><a href="#section" className="ml-[3px]">{name}</a>
          </li>
        ))}
      </ul>
      <div className="mb-1 flex h-[17px] items-center px-2">
        <Svg w={6} h={8}><path d="M5 0v8L1 4z" fill="#3c4a66" /></Svg>
        <div className="ml-[5px] flex h-[17px] w-[98px] items-center justify-center gap-px border border-[#64809f] bg-[linear-gradient(#b3c8e4,#8fabcb)]">
          {[0, 1, 2, 3].map((i) => <span key={i} className="h-2 w-px bg-[#5d7697]" />)}
        </div>
        <Svg w={6} h={8} className="ml-4"><path d="M1 0v8l4-4z" fill="#3c4a66" /></Svg>
      </div>
    </div>
  );
}

function ReportColumn({ sections }: { sections: Section[] }) {
  return (
    <div className="flex flex-1 flex-col gap-3">
      {sections.map((section, i) => (
        <section key={i}>
          {section.title && (
            <h4 className="h-[18px] bg-[#f4a460] text-center text-[14px] leading-[18px] font-bold text-[#8b4513]">{section.title}</h4>
          )}
          <ul className="grid auto-rows-fr" style={{ height: Math.round(section.items.length * 17.7) }}>
            {section.items.map(([name, page]) => (
              <li key={name} className="flex min-h-0 items-center justify-between pt-[2px] text-[10px] leading-4 font-bold text-[#0000ff] underline">
                <a href="#item">{name}</a>
                <a href="#item">{page}</a>
              </li>
            ))}
          </ul>
        </section>
      ))}
    </div>
  );
}

function ReportPage() {
  return (
    <div className="flex min-w-0 flex-1 overflow-hidden pb-[5px]">
      <div className="flex min-w-0 flex-1 justify-center overflow-hidden pt-4 pr-[17px]">
        <article className="h-[900px] w-[632px] shrink-0 rounded-[10px] border-[3px] border-[#ffd700] bg-white px-[33px] pt-[33px] [font-family:'Liberation_Sans',Arial,sans-serif]">
          <h2 className="text-center text-[35px] leading-[40px] font-bold text-[#8b4513]">Anchors</h2>
          <h3 className="text-center text-[23px] leading-[21px] font-bold text-[#cd853f]">Contents</h3>
          <div className="flex gap-[18px]">
            <ReportColumn sections={leftColumn} />
            <ReportColumn sections={rightColumn} />
          </div>
        </article>
      </div>
      <div className="flex w-[21px] shrink-0 flex-col items-center pt-2">
        <Svg w={8} h={4}><path d="M0 4h8L4 0z" fill="#3c4a66" /></Svg>
        <div className="mt-1.5 flex h-3 w-[17px] flex-col items-center justify-center gap-px rounded-[1px] border border-[#64809f] bg-[#a9c0de]">
          {[0, 1, 2, 3].map((i) => <span key={i} className="h-px w-2 bg-[#5d7697]" />)}
        </div>
        <div className="flex-1" />
        <Svg w={8} h={4} className="mb-[2px]"><path d="M0 0h8L4 4z" fill="#3c4a66" /></Svg>
      </div>
    </div>
  );
}

function PageNavigation() {
  return (
    <div className="mx-[2px] flex gap-[10px]">
      <div className={clsx(bar, "flex-1")}>
        <Grip />
        <BarTool label="First page"><Svg w={10} h={11} className="opacity-60"><path d="M.5.5h2v10h-2zM9.500.5v10L3.500 5.500z" fill="#9dbbe6" stroke="#6c8fc4" /></Svg></BarTool>
        <BarTool label="Previous page"><Svg w={8} h={11} className="opacity-60"><path d="M6.500 .5v10L1 5.500z" fill="#9dbbe6" stroke="#6c8fc4" /></Svg></BarTool>
        <BarSep />
        <span className="w-[120px] text-center text-[#3f4c60]">Page 1 of 69</span>
        <BarSep />
        <BarTool label="Next page"><Svg w={8} h={11}><path d="M1.500.5v10L7 5.500z" fill="url(#navBlue)" stroke="#2d55a0" /></Svg></BarTool>
        <BarTool label="Last page"><Svg w={10} h={11}><path d="M7.500.5h2v10h-2zM.5.5v10l6-5z" fill="url(#navBlue)" stroke="#2d55a0" /></Svg></BarTool>
      </div>
      <div className={clsx(bar, "w-[309px] shrink-0")}>
        <Grip />
        <BarTool label="Single page view"><Svg w={10} h={12}><path d="M0 0h10v12H0z" fill="url(#sheet)" /><path d="M0 11.500h9.500V0" stroke="#6288c4" /></Svg></BarTool>
        <BarTool label="Continuous view"><Svg w={10} h={13}><path d="M0 0h10v5H0zM0 7h10v6H0z" fill="url(#sheet)" /><path d="M0 4.500h10M0 12.500h10M9.500 7v6" stroke="#6288c4" /></Svg></BarTool>
        <BarTool label="Multiple page view" on><Svg w={12} h={12}><path d="M.5.5h4v4h-4zM7.500.5h4v4h-4zM.5 7.500h4v4h-4zM7.500 7.500h4v4h-4z" fill="#e6effc" stroke="#6c8cc0" /></Svg></BarTool>
        <BarSep />
        <label htmlFor="preview-zoom" className="w-14 pl-2 text-black">75%</label>
        <ZoomSlider id="preview-zoom" value={44} />
      </div>
    </div>
  );
}

function Properties() {
  const tab = "flex h-6 items-center rounded-b-[4px] text-black";
  const plain = "gap-[5px] bg-[linear-gradient(#f3f5f8_50%,#dde1e6_50%)] pl-[6px] pr-[9px]";
  return (
    <aside className="flex w-[347px] shrink-0 flex-col">
      <div className="flex-1 border border-[#8f9bab] border-b-0 bg-white px-[3px] pt-2">
        <div className="flex items-center">
          <div className="relative h-[22px] flex-1 border border-[#cfd3d8]">
            <select aria-label="Selected component" className="h-full w-full appearance-none bg-white px-[6px] text-black"><option>Page1 : Page</option></select>
            <span className="pointer-events-none absolute top-[9px] right-[6px]"><Down className="text-[#222]" /></span>
          </div>
          <button type="button" aria-label="Sort" className="mr-1 ml-[6px]">
            <Svg w={17} h={17}>
              <text x="1" y="8" fontSize="9" fontWeight="bold" fill="#2c4a94" fontFamily="Liberation Serif">A</text>
              <text x="1" y="16" fontSize="9" fontWeight="bold" fill="#9c2424" fontFamily="Liberation Serif">Z</text>
              <path d="M13.500 1v12M11.500 12h4l-2 3z" stroke="#000" fill="#000" />
            </Svg>
          </button>
        </div>
        <div className={clsx(bar, "mx-[2px] mt-[6px]")}>
          <Grip />
          <button type="button" aria-label="Properties view" className={clsx("flex h-6 w-6 items-center justify-center", active)}>
            <Svg w={12} h={12}><path d="M.5.5h11v11H.5z" fill="#fff" stroke="#3f4a78" /><path d="M2 3.500h2M2 5.500h2M2 7.500h2M2 9.500h2M5 3.500h5M5 5.500h5M5 7.500h5M5 9.500h5" stroke="#2d3d8c" /></Svg>
          </button>
          <button type="button" aria-label="Events view" className="flex h-6 w-6 items-center justify-center">
            <Svg w={12} h={12}><path d="M5 .5h6L8 4h2l-7 7.500L5 6H2z" fill="#fdec8c" stroke="#a08848" strokeWidth=".7" /></Svg>
          </button>
          <div className="w-[6px]" />
          <BarSep />
          <button type="button" className={clsx("ml-px h-6 px-[3px] text-[#3f4c60]", active)}>Localize Property Grid</button>
        </div>
        <div className="mx-1 mt-[7px] flex flex-col gap-1">
          {propertyGroups.map((name) => (
            <button key={name} type="button" className="flex h-[19px] items-center gap-[3px] rounded-[2px] border border-[#8d939c] bg-[linear-gradient(#fdf3d2,#f5f6f9_10%,#d9dde4)] pl-[6px] font-bold text-[#3b4a5e]">
              <Svg w={5} h={8}><path d="M0 0v8l5-4z" fill="#000" /></Svg>{name}
            </button>
          ))}
        </div>
      </div>
      <div className="flex gap-[5px] pl-[9px]">
        <button type="button" className={clsx(tab, "gap-[3px] border border-t-0 border-[#d39a4b] bg-[linear-gradient(#fbd98a,#f8cf6e_50%,#fbdf85)] pr-[7px] pl-1")}>
          <Svg><path d="M1.500 4.500h10v10h-10z" fill="#fff" stroke="#4f75b8" /><path d="M3 7.500h2M6 7.500h4M3 9.500h2M6 9.500h4M3 11.500h2M6 11.500h4" stroke="#4f75b8" /><path d="M4 5l5-4 6 1v4l-4 1-2-2-3 2z" fill="url(#gold)" stroke="#94742c" /></Svg>
          Properties
        </button>
        <button type="button" className={clsx(tab, plain)}>
          <Svg w={14} h={14}><path d="M5.500 1.500h7v8h-7z" fill="#dbe7fb" stroke="#3563bb" /><path d="M5 1h8v3H5z" fill="url(#blue)" /><path d="M1.500 5.500h6v7h-6z" fill="#fff" stroke="#3563bb" /><path d="M1 5h7v3H1z" fill="url(#blue)" /><path d="M3 10.500h1M5 10.500h1" stroke="#3563bb" /></Svg>
          Dictionary
        </button>
        <button type="button" className={clsx(tab, plain)}>
          <Svg w={14} h={14}><path d="M.5.5h13v13H.5z" fill="url(#sheet)" stroke="#4d6ea6" /><path d="M2 2.500h4M4.500 3v8M5 6.500h2M5 10.500h2M8 6.500h4M8 10.500h4" stroke="#23365c" /></Svg>
          Report Tree
        </button>
      </div>
    </aside>
  );
}

function StatusBar() {
  return (
    <footer className="flex h-[26px] shrink-0 items-center border-t border-white bg-[linear-gradient(#dce6f4,#b0c1d7)] text-black">
      <button type="button" className="flex w-[108px] items-center justify-between pr-[6px] pl-[15px] text-[#3f4c60]">
        Centimeters <Down className="text-black" />
      </button>
      <StatusSep />
      <span className="w-[98px] pl-9">Page1</span>
      <StatusSep />
      <span className="w-[118px] pl-4 whitespace-pre">X:3,58  Y:-0,71</span>
      <StatusSep />
      <div className="flex-1" />
      <StatusSep />
      <label htmlFor="design-zoom" className="mr-[7px] ml-[5px]">75%</label>
      <ZoomSlider id="design-zoom" value={31} tick />
      <div className="w-[11px]" />
    </footer>
  );
}

export default function App() {
  const [autoRefresh, setAutoRefresh] = useState(true);

  return (
    <div className="flex h-screen flex-col overflow-hidden bg-white pt-[18px] pb-[19px] text-[11px] leading-[14px] [font-family:'DejaVu_Sans',Verdana,sans-serif]">
      <Gradients />
      <TitleBar />
      <div className="flex min-h-0 flex-1">
        <div className="w-2 shrink-0 border-l border-[#b7a6ae] bg-[linear-gradient(#6f4c5e,#775466_19%,#f8eef0_22%,#ffffff_23%,#8f6c80_26%,#886276_28%,#f3ead4_30%,#77687a_31%,#8f6872_36%,#dba898_42%,#18141c_44%,#2a2030_53%,#2c1a20_56%,#8a6a48_59%,#5c4028_60%,#bba048_65%,#6b6330_70%,#3a3520_75%,#8b7a50_85%,#4a4028_90%,#1c1a10)]" />
        <div className="flex min-w-0 flex-1 flex-col border border-[#3b2a34] border-r-[#574150]">
          <RibbonTabs />
          <Ribbon />
          <main className="flex min-h-0 flex-1 bg-[linear-gradient(#b8cce4,#bdd0e9_10%,#a6bcd8_42%,#9db4d1_58%,#8aa5c4_80%,#829ebe)] pt-1 pr-[2px] pl-[3px]">
            <Toolbox />
            <div className="ml-2 flex min-w-0 flex-1 flex-col pb-[9px]">
              <div className="-ml-[3px] flex h-[23px] shrink-0 gap-[2px] text-black">
                <button type="button" className="flex w-16 items-center justify-center gap-[6px] rounded-[3px] border border-[#7b8087] bg-[linear-gradient(#f3f5f8_50%,#d8dde4_50%)]"><PageIcon />Page1</button>
                <button type="button" className="flex w-[73px] items-center justify-center gap-[3px] rounded-[3px] border border-[#b4a06a] bg-[linear-gradient(#ffe27a,#ffe98f)]"><PreviewIcon />Preview</button>
              </div>
              <div className="mt-[5px] flex min-h-0 flex-1 flex-col bg-[linear-gradient(#c4d6ee,#b9cde6_15%,#a5bcd8_42%,#9fb5d3_55%,#8ba6c5_85%,#86a2c2)] pt-[2px]">
                <div className="mx-[2px] shrink-0"><PreviewToolbar /></div>
                <div className="flex min-h-0 flex-1 pl-[2px]">
                  <BookmarkTree />
                  <div className="my-px w-[3px] shrink-0 bg-white" />
                  <ReportPage />
                </div>
                <PageNavigation />
                <div className="mt-[2px] flex h-7 shrink-0 items-center border-t border-white bg-[linear-gradient(#dae5f3,#aabdd4)]">
                  <button type="button" disabled className="ml-[142px] w-7 text-[#98a6b9]">Stop</button>
                  <button type="button" className="ml-[65px] text-[#3f4c60]">Refresh</button>
                  <div className="relative ml-8 h-[15px] w-[15px]">
                    <input
                      id="auto-refresh" type="checkbox" checked={autoRefresh} onChange={(e) => setAutoRefresh(e.target.checked)}
                      className="block h-[15px] w-[15px] appearance-none border border-[#7c828b] bg-[#e6e8ec]"
                    />
                    {autoRefresh && (
                      <span className="pointer-events-none absolute top-[3px] left-[3px]">
                        <Svg w={9} h={9}><path d="M1 4.500L3.500 7.500 8 1" stroke="#4b5563" strokeWidth="2" /></Svg>
                      </span>
                    )}
                  </div>
                  <label htmlFor="auto-refresh" className="ml-1 text-black">Auto Refresh</label>
                </div>
              </div>
            </div>
            <div className="flex w-[13px] shrink-0 items-center justify-end pr-px"><span className="h-[10px] w-px bg-[#5d6b80]" /></div>
            <div className="flex pb-1"><Properties /></div>
          </main>
          <StatusBar />
        </div>
        <div className="w-2 shrink-0 border-r border-[#c8b8bc] bg-[linear-gradient(#a27486,#a87886_7%,#ffa088_11%,#fbc4bc_14%,#f8d4d0_17%,#eef0f8_20%,#e9a8b0_22%,#ffffff_25%,#a8a8ae_29%,#dfeaf4_32%,#3d6630_35%,#4a4a6c_38%,#f0e0cc_41%,#1c1a28_46%,#23202c_55%,#b09a58_65%,#3a3520_72%,#8b8448_82%,#4a4428_92%,#2c2818)]" />
      </div>
      <div className="h-[7px] shrink-0 rounded-b-md border-b border-[#a8a49a] bg-[linear-gradient(90deg,#1c1a10,#6b6038_6%,#23200f_12%,#2c2a18_25%,#7a6230_27%,#2a2818_32%,#3f3c28_50%,#b5a04c_51%,#c0aa58_55%,#504c38_60%,#3c3828_75%,#c8b058_79%,#3a3824_82%,#8a7840_95%,#4a4a28)]" />
    </div>
  );
}
